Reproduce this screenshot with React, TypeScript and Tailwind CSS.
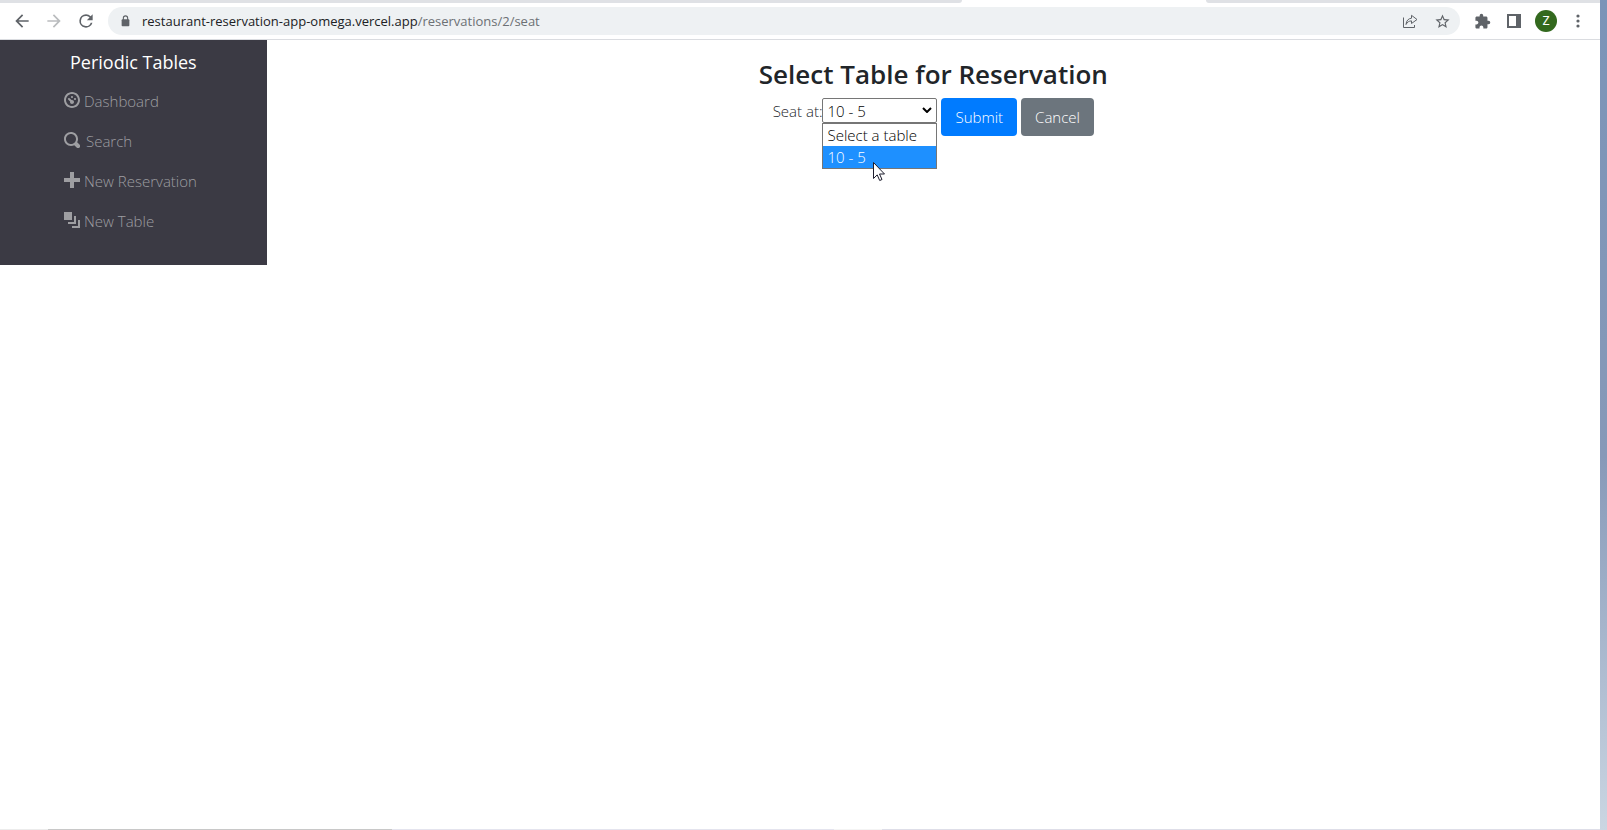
import { useState } from "react";
import type { ReactNode } from "react";

function ToolbarButton({ label, children }: { label: string; children: ReactNode }) {
  return (
    <button type="button" aria-label={label} className="flex size-8 shrink-0 items-center justify-center text-[#5f6368]">
      {children}
    </button>
  );
}

function Material({ d, className = "size-5" }: { d: string; className?: string }) {
  return (
    <svg viewBox="0 0 24 24" className={className} fill="currentColor" aria-hidden="true">
      <path d={d} />
    </svg>
  );
}

function BrowserBar() {
  return (
    <header>
      <div className="flex h-[3px] overflow-hidden">
        <div className="w-[60.1%] rounded-br-[6px] bg-[#dfe1e5]" />
        <div className="w-[15.3%]" />
        <div className="flex-1 rounded-bl-[6px] bg-[#dfe1e5]" />
      </div>
      <div className="flex h-[37px] items-center border-b border-[#dadce0] px-[6px]">
        <ToolbarButton label="Back">
          <Material d="M20 11H7.83l5.59-5.59L12 4l-8 8 8 8 1.41-1.41L7.83 13H20v-2z" />
        </ToolbarButton>
        <button type="button" disabled aria-label="Forward" className="flex size-8 items-center justify-center text-[#babcbe]">
          <Material d="M12 4l-1.41 1.41L16.17 11H4v2h12.17l-5.58 5.59L12 20l8-8z" />
        </button>
        <ToolbarButton label="Reload">
          <Material d="M17.65 6.35A7.96 7.96 0 0 0 12 4a8 8 0 1 0 7.73 10h-2.08A6 6 0 1 1 12 6c1.66 0 3.14.69 4.22 1.78L13 11h7V4l-2.35 2.35z" />
        </ToolbarButton>
        <div className="ml-[6px] flex h-7 flex-1 items-center rounded-full bg-[#eef1f3] pl-[13px] pr-[2px]">
          <svg viewBox="0 0 10 14" className="h-3 w-[9px] text-[#5f6368]" aria-hidden="true">
            <path d="M2.5 6V3.5a2.5 2.5 0 0 1 5 0V6" fill="none" stroke="currentColor" strokeWidth="1.3" />
            <rect x="0.5" y="5" width="9" height="8" rx="1" fill="currentColor" />
          </svg>
          <p className="ml-3 flex-1 text-[13px] leading-5 text-[#202124]">
            restaurant-reservation-app-omega.vercel.app
            <span className="text-[#6c7074]">/reservations/2/seat</span>
          </p>
          <ToolbarButton label="Share this page">
            <svg viewBox="0 0 16 16" className="size-4" fill="none" stroke="currentColor" aria-hidden="true">
              <path d="M1.5 4.5v10h11v-2.5" />
              <path d="M4 11.5C4.3 7.5 6.5 5.5 9.5 5.2V2.3L15 6.5 9.5 10.5V7.9C7 7.9 5.3 9 4 11.5Z" strokeLinejoin="round" />
            </svg>
          </ToolbarButton>
          <ToolbarButton label="Bookmark this tab">
            <Material
              className="size-[17px]"
              d="M22 9.24l-7.19-.62L12 2 9.19 8.63 2 9.24l5.46 4.73L5.82 21 12 17.27 18.18 21l-1.63-7.03L22 9.24zM12 15.4l-3.76 2.27 1-4.28-3.32-2.88 4.38-.38L12 6.1l1.71 4.04 4.38.38-3.32 2.88 1 4.28L12 15.4z"
            />
          </ToolbarButton>
        </div>
        <div className="ml-[6px] flex items-center">
          <ToolbarButton label="Extensions">
            <Material
              className="size-[17px]"
              d="M20.5 11H19V7c0-1.1-.9-2-2-2h-4V3.5a2.5 2.5 0 0 0-5 0V5H4c-1.1 0-1.99.9-1.99 2v3.8H3.5c1.49 0 2.7 1.21 2.7 2.7s-1.21 2.7-2.7 2.7H2V20c0 1.1.9 2 2 2h3.8v-1.5c0-1.49 1.21-2.7 2.7-2.7s2.7 1.21 2.7 2.7V22H17c1.1 0 2-.9 2-2v-4h1.5a2.5 2.5 0 0 0 0-5z"
            />
          </ToolbarButton>
          <ToolbarButton label="Side panel">
            <svg viewBox="0 0 14 14" className="size-[14px]" aria-hidden="true">
              <path d="M0 0h14v14H0zM2 2v10h7V2z" fill="currentColor" fillRule="evenodd" />
            </svg>
          </ToolbarButton>
          <ToolbarButton label="Profile">
            <span className="flex size-[22px] items-center justify-center rounded-full bg-[#33691e] font-[Roboto] text-[12px] text-white">
              Z
            </span>
          </ToolbarButton>
          <ToolbarButton label="Browser menu">
            <svg viewBox="0 0 4 14" className="h-[14px] w-1" fill="currentColor" aria-hidden="true">
              <circle cx="2" cy="2" r="1.6" />
              <circle cx="2" cy="7" r="1.6" />
              <circle cx="2" cy="12" r="1.6" />
            </svg>
          </ToolbarButton>
        </div>
      </div>
    </header>
  );
}

const navigation = [
  {
    label: "Dashboard",
    gap: "gap-1",
    icon: "M4 0c-2.2 0-4 1.8-4 4s1.8 4 4 4 4-1.8 4-4-1.8-4-4-4zm0 1c1.66 0 3 1.34 3 3s-1.34 3-3 3-3-1.34-3-3 1.34-3 3-3zm0 1c-.28 0-.5.22-.5.5s.22.5.5.5.5-.22.5-.5-.22-.5-.5-.5zm-1.66 1a.5.5 0 0 0-.19.84l.91.91c-.02.08-.06.16-.06.25 0 .55.45 1 1 1s1-.45 1-1-.45-1-1-1c-.09 0-.17.04-.25.06l-.91-.91a.5.5 0 0 0-.44-.16.5.5 0 0 0-.06 0zm3.16 0c-.28 0-.5.22-.5.5s.22.5.5.5.5-.22.5-.5-.22-.5-.5-.5z",
  },
  {
    label: "Search",
    gap: "gap-[6px]",
    icon: "M3.5 0c-1.93 0-3.5 1.57-3.5 3.5s1.57 3.5 3.5 3.5c.59 0 1.17-.14 1.66-.41a1 1 0 0 0 .13.13l1 1a1.02 1.02 0 1 0 1.44-1.44l-1-1a1 1 0 0 0-.16-.13c.27-.49.44-1.06.44-1.66 0-1.93-1.55-3.5-3.5-3.5zm0 1c1.39 0 2.5 1.11 2.5 2.5 0 .66-.24 1.27-.66 1.72l-.03.03a1 1 0 0 0-.13.13c-.44.4-1.04.63-1.69.63-1.39 0-2.5-1.11-2.5-2.5s1.11-2.5 2.5-2.5z",
  },
  {
    label: "New Reservation",
    gap: "gap-1",
    icon: "M3 0v3h-3v2h3v3h2v-3h3v-2h-3v-3h-2z",
  },
  {
    label: "New Table",
    gap: "gap-1",
    icon: "M0 0v4h4v-4h-4zm5 2v3h-3v1h4v-4h-1zm2 2v3h-3v1h4v-4h-1z",
  },
];

function Sidebar() {
  return (
    <aside className="w-1/6 shrink-0 self-start bg-[#3b3a44] pb-6 text-[#9e9ea2]">
      <a href="#home" className="mt-2 block text-center text-lg leading-7 text-white">
        Periodic Tables
      </a>
      <nav className="pl-16 pt-[5px]">
        <ul>
          {navigation.map(({ label, gap, icon }) => (
            <li key={label}>
              <a href={"#" + label.toLowerCase().replace(" ", "-")} className={"flex h-10 items-center font-light " + gap}>
                <svg viewBox="0 0 8 8" className="mb-0.5 size-4 shrink-0" fill="currentColor" aria-hidden="true">
                  <path d={icon} />
                </svg>
                <span className="text-[15px] leading-6">{label}</span>
              </a>
            </li>
          ))}
        </ul>
      </nav>
    </aside>
  );
}

const tables = ["Select a table", "10 - 5"];

function SeatForm() {
  const [table, setTable] = useState("10 - 5");
  return (
    <form className="mt-[7px] flex items-start gap-1 text-[15px]" onSubmit={(event) => event.preventDefault()}>
      <div className="flex items-start">
        <label htmlFor="table" className="font-light leading-[26px] text-[#212529]">
          Seat at:
        </label>
        <div className="relative">
          <select
            id="table"
            value={table}
            onChange={(event) => setTable(event.target.value)}
            className="block h-[25px] w-[115px] appearance-none rounded-[2px] border border-[#767676] bg-white pl-1 font-light leading-5 text-black"
          >
            {tables.map((name) => (
              <option key={name}>{name}</option>
            ))}
          </select>
          <svg viewBox="0 0 10 6" className="pointer-events-none absolute right-[5px] top-[9px] h-[6px] w-[10px]" fill="none" stroke="black" strokeWidth="2" aria-hidden="true">
            <path d="M1 1l4 4 4-4" />
          </svg>
          <ul role="listbox" aria-label="Tables" className="absolute left-0 top-full w-full border border-[#767676] bg-white font-light leading-[22px] text-black">
            {tables.map((name) => (
              <li
                key={name}
                role="option"
                aria-selected={name === table}
                className="h-[22px] pl-1 aria-selected:bg-[#1e90ff] aria-selected:text-white"
              >
                {name}
              </li>
            ))}
          </ul>
          <svg viewBox="0 0 12 20" className="absolute left-[51px] top-16 h-5 w-3" aria-hidden="true">
            <path d="M.5.5v16l3.7-3.6 2.5 5.6 2.3-1-2.5-5.5h5z" fill="white" stroke="#1c1c2c" />
          </svg>
        </div>
      </div>
      <button type="submit" className="h-[38px] rounded-[4px] bg-[#007bff] px-[14px] font-light text-white">
        Submit
      </button>
      <button type="button" className="h-[38px] rounded-[4px] bg-[#6c757d] px-[14px] font-light text-white">
        Cancel
      </button>
    </form>
  );
}

export default function App() {
  return (
    <div className="flex min-h-screen bg-white font-['Open_Sans',sans-serif]">
      <div className="flex flex-1 flex-col">
        <BrowserBar />
        <div className="flex flex-1">
          <Sidebar />
          <main className="flex flex-1 flex-col items-center pt-[17px]">
            <h1 className="text-[26px] font-semibold leading-[34px] text-[#212529]">Select Table for Reservation</h1>
            <SeatForm />
          </main>
        </div>
        <div className="flex h-px">
          <div className="w-[3%] bg-[#ececec]" />
          <div className="w-[21.5%] bg-[#c8c8c8]" />
          <div className="w-[27.6%] bg-[#e4e4ee]" />
          <div className="w-[3%] bg-[#f4f4f4]" />
          <div className="flex-1 bg-[#dedee8]" />
        </div>
      </div>
      <div className="w-[7px] bg-linear-to-b from-[#7b94b8] via-[#8799b8] via-55% to-[#cbd6e2]" />
    </div>
  );
}
